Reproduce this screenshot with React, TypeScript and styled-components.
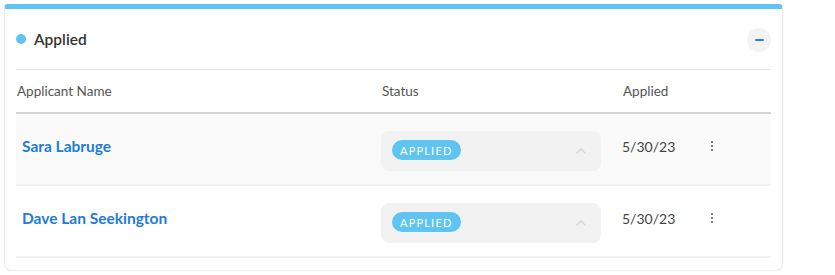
import styled, { createGlobalStyle } from "styled-components";

const Global = createGlobalStyle`
  body {
    margin: 0;
    background: #ffffff;
    font-family: Lato, "Noto Sans", sans-serif;
  }
`;

const Page = styled.div`
  padding: 4px 0 0 4px;
`;

const Card = styled.div`
  width: 779px;
  box-sizing: border-box;
  background: #fff;
  border: 1px solid #ececec;
  border-top: 5px solid #5ec4f2;
  border-radius: 4px 4px 8px 8px;
  box-shadow: 0 1px 3px rgba(0, 0, 0, 0.05);
  padding: 0 11px 12px;
`;

const Header = styled.div`
  display: flex;
  align-items: center;
  justify-content: space-between;
  padding: 19px 0 17px;
  border-bottom: 1px solid #e2e2e2;
`;

const Title = styled.div`
  display: flex;
  align-items: center;
  gap: 8px;
  font-size: 15.5px;
  font-weight: 600;
  color: #333;
  margin-top: -2px;
`;

const Dot = styled.span`
  width: 10px;
  height: 10px;
  border-radius: 50%;
  background: #5ec4f2;
`;

const Collapse = styled.button`
  width: 24px;
  height: 24px;
  border-radius: 50%;
  border: none;
  background: #f3f3f3;
  display: flex;
  align-items: center;
  justify-content: center;
  padding: 0;
`;

const Minus = styled.span`
  width: 9px;
  height: 2px;
  background: #2a7fd6;
  border-radius: 1px;
`;

const Row = styled.div<{ $head?: boolean; $shade?: boolean }>`
  display: grid;
  grid-template-columns: 365px 241px 89px 1fr;
  align-items: center;
  height: ${(p) => (p.$head ? "42px" : "70px")};
  background: ${(p) => (p.$shade ? "#fafafa" : "transparent")};
  border-bottom: 2px solid ${(p) => (p.$head ? "#d4d4d4" : "#f1f1f1")};
`;

const HeadCell = styled.div`
  font-size: 13.5px;
  color: #555;
  padding-left: 1px;
`;

const Name = styled.a`
  font-size: 15.5px;
  font-weight: 700;
  color: #1f7bd6;
  padding-left: 6px;
  margin-top: -6px;
  text-decoration: none;
`;

const Select = styled.div`
  width: 220px;
  height: 40px;
  box-sizing: border-box;
  border-radius: 8px;
  background: #f2f2f2;
  display: flex;
  align-items: center;
  justify-content: space-between;
  padding: 0 14px 0 11px;
  margin-top: 4px;
`;

const Badge = styled.span`
  height: 20px;
  padding: 0 8px;
  border-radius: 10px;
  background: #5ec4f2;
  color: #fff;
  font-size: 11px;
  letter-spacing: 1.2px;
  display: flex;
  align-items: center;
  margin-top: -2px;
`;

const DateCell = styled.div`
  font-size: 14px;
  color: #444;
  margin-top: -6px;
`;

const More = styled.div`
  display: flex;
  flex-direction: column;
  gap: 2px;
  margin-top: -6px;
  & span {
    width: 2px;
    height: 2px;
    border-radius: 50%;
    background: #555;
  }
`;

const rows = [
  { name: "Sara Labruge", date: "5/30/23" },
  { name: "Dave Lan Seekington", date: "5/30/23" },
];

export default function App() {
  return (
    <Page>
      <Global />
      <Card>
        <Header>
          <Title>
            <Dot />
            Applied
          </Title>
          <Collapse>
            <Minus />
          </Collapse>
        </Header>
        <Row $head>
          <HeadCell>Applicant Name</HeadCell>
          <HeadCell>Status</HeadCell>
          <HeadCell>Applied</HeadCell>
          <div />
        </Row>
        {rows.map((r, i) => (
          <Row key={r.name} $shade={i === 0}>
            <Name href="#">{r.name}</Name>
            <Select>
              <Badge>APPLIED</Badge>
              <svg width="12" height="8" viewBox="0 0 12 8">
                <path d="M1.5 6.5 6 2l4.5 4.5" fill="none" stroke="#d2d2d2" strokeWidth="1.3" />
              </svg>
            </Select>
            <DateCell>{r.date}</DateCell>
            <More>
              <span />
              <span />
              <span />
            </More>
          </Row>
        ))}
      </Card>
    </Page>
  );
}
